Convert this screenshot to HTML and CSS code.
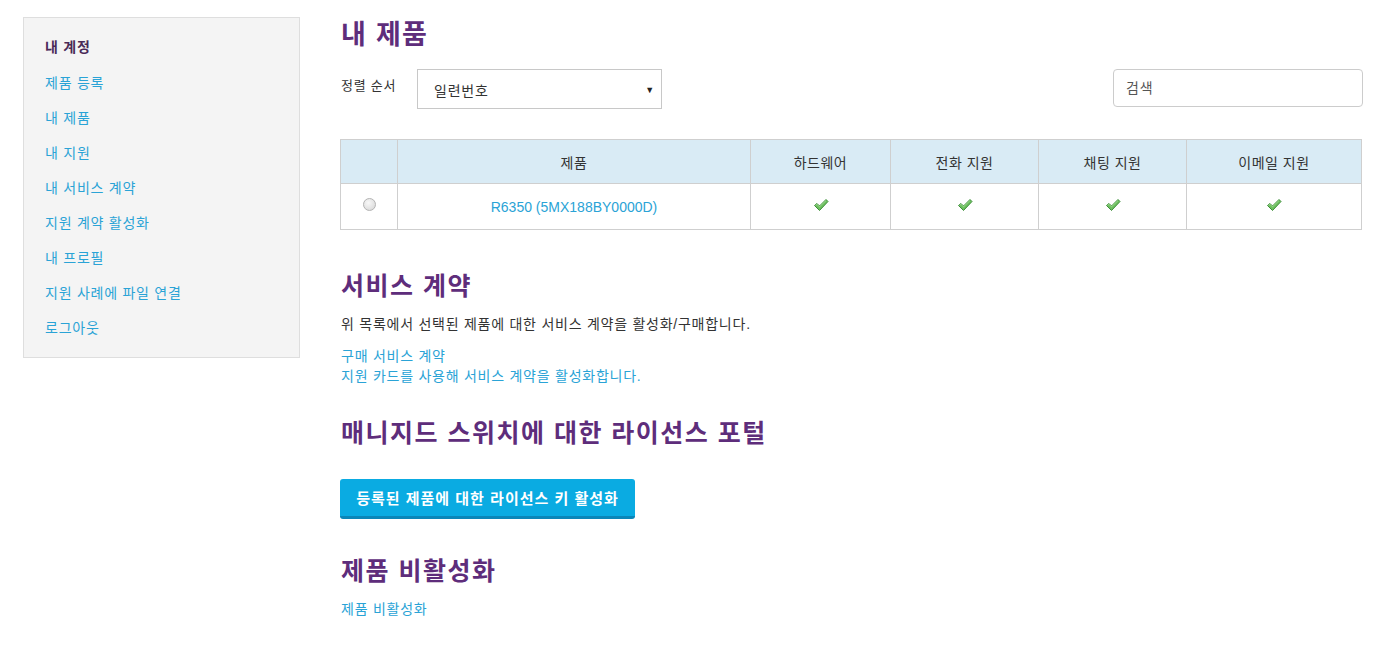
FILE: index.html
```html
<!DOCTYPE html>
<html lang="ko">
<head>
<meta charset="utf-8">
<title>내 제품</title>
<link rel="stylesheet" href="styles.css">
</head>
<body>
<div class="page">
  <aside class="sidebar">
    <div class="side-title">내 계정</div>
    <ul class="side-list">
      <li><a href="#">제품 등록</a></li>
      <li><a href="#">내 제품</a></li>
      <li><a href="#">내 지원</a></li>
      <li><a href="#">내 서비스 계약</a></li>
      <li><a href="#">지원 계약 활성화</a></li>
      <li><a href="#">내 프로필</a></li>
      <li><a href="#">지원 사례에 파일 연결</a></li>
      <li><a href="#">로그아웃</a></li>
    </ul>
  </aside>
  <main class="main">
    <h1 class="h-title">내 제품</h1>
    <div class="toolbar">
      <div class="sort">
        <span class="sort-label">정렬 순서</span>
        <div class="select"><span>일련번호</span><span class="arrow">▼</span></div>
      </div>
      <div class="search">검색</div>
    </div>
    <table class="products">
      <thead>
        <tr>
          <th class="c-radio"></th>
          <th class="c-prod">제품</th>
          <th class="c-hw">하드웨어</th>
          <th class="c-ph">전화 지원</th>
          <th class="c-ch">채팅 지원</th>
          <th class="c-em">이메일 지원</th>
        </tr>
      </thead>
      <tbody>
        <tr>
          <td><span class="radio"></span></td>
          <td><a class="prod-link" href="#">R6350 (5MX188BY0000D)</a></td>
          <td><svg class="check" viewBox="0 0 16 14" width="16" height="14"><path d="M1.5 7.5 L4 5.5 L6.5 8 L13 1.5 L15 3.5 L6.5 12.5 Z" fill="#6cbf5e" stroke="#3e8e3a" stroke-width="1" stroke-linejoin="round"/><path d="M2.5 7.4 L4 6.3 L6.5 8.8 L13 2.5" fill="none" stroke="#a8e09a" stroke-width="0.8"/></svg></td>
          <td><svg class="check" viewBox="0 0 16 14" width="16" height="14"><path d="M1.5 7.5 L4 5.5 L6.5 8 L13 1.5 L15 3.5 L6.5 12.5 Z" fill="#6cbf5e" stroke="#3e8e3a" stroke-width="1" stroke-linejoin="round"/><path d="M2.5 7.4 L4 6.3 L6.5 8.8 L13 2.5" fill="none" stroke="#a8e09a" stroke-width="0.8"/></svg></td>
          <td><svg class="check" viewBox="0 0 16 14" width="16" height="14"><path d="M1.5 7.5 L4 5.5 L6.5 8 L13 1.5 L15 3.5 L6.5 12.5 Z" fill="#6cbf5e" stroke="#3e8e3a" stroke-width="1" stroke-linejoin="round"/><path d="M2.5 7.4 L4 6.3 L6.5 8.8 L13 2.5" fill="none" stroke="#a8e09a" stroke-width="0.8"/></svg></td>
          <td><svg class="check" viewBox="0 0 16 14" width="16" height="14"><path d="M1.5 7.5 L4 5.5 L6.5 8 L13 1.5 L15 3.5 L6.5 12.5 Z" fill="#6cbf5e" stroke="#3e8e3a" stroke-width="1" stroke-linejoin="round"/><path d="M2.5 7.4 L4 6.3 L6.5 8.8 L13 2.5" fill="none" stroke="#a8e09a" stroke-width="0.8"/></svg></td>
        </tr>
      </tbody>
    </table>

    <h2 class="h-sec first">서비스 계약</h2>
    <p class="desc">위 목록에서 선택된 제품에 대한 서비스 계약을 활성화/구매합니다.</p>
    <div class="links">
      <a href="#">구매 서비스 계약</a>
      <a href="#">지원 카드를 사용해 서비스 계약을 활성화합니다.</a>
    </div>

    <h2 class="h-sec">매니지드 스위치에 대한 라이선스 포털</h2>
    <button class="btn">등록된 제품에 대한 라이선스 키 활성화</button>

    <h2 class="h-sec">제품 비활성화</h2>
    <div class="links"><a href="#">제품 비활성화</a></div>
  </main>
</div>
</body>
</html>
```

FILE: styles.css
```css
* { box-sizing: border-box; }
body {
  margin: 0;
  font-family: "Liberation Sans", "Noto Sans CJK KR", sans-serif;
  font-size: 14px;
  letter-spacing: 0.75px;
  color: #333;
  background: #fff;
}
a { color: #2aa3d6; text-decoration: none; }

.page {
  display: flex;
  align-items: flex-start;
  padding-left: 23px;
}

.sidebar {
  width: 277px;
  margin-top: 17px;
  background: #f4f4f4;
  border: 1px solid #dedede;
  padding: 12px 21px 11px;
  flex-shrink: 0;
}
.side-title {
  height: 35px;
  line-height: 35px;
  font-weight: bold;
  font-size: 14px;
  color: #4a2a58;
}
.side-list { list-style: none; margin: 1px 0 0; padding: 0; }
.side-list li {
  height: 35px;
  line-height: 35px;
  font-size: 14px;
}

.main {
  margin-left: 41px;
  width: 1022px;
}
.h-title {
  margin: 17px 0 0;
  font-size: 27px;
  line-height: 36px;
  letter-spacing: 1.3px;
  color: #5e2d7b;
  font-weight: bold;
}
.toolbar {
  margin-top: 16px;
  display: flex;
  justify-content: space-between;
  align-items: flex-start;
}
.sort { display: flex; align-items: flex-start; }
.sort-label {
  width: 76px;
  padding-top: 8px;
  line-height: 18px;
  font-size: 13px;
  color: #333;
}
.select {
  width: 245px;
  height: 40px;
  border: 1px solid #c8c8c8;
  display: flex;
  align-items: center;
  justify-content: space-between;
  padding: 2px 6px 0 16px;
  color: #333;
  font-size: 14px;
}
.arrow { font-size: 9px; color: #222; }
.search {
  width: 250px;
  height: 38px;
  border: 1px solid #ccc;
  border-radius: 4px;
  padding: 0 12px;
  line-height: 36px;
  color: #555;
  font-size: 14px;
}

.products {
  margin-top: 30px;
  margin-left: -1px;
  width: 1022px;
  border-collapse: collapse;
  border: 1px solid #cfcfcf;
}
.products th, .products td {
  border: 1px solid #cfcfcf;
  text-align: center;
  font-weight: normal;
}
.products th {
  background: #d9ebf5;
  height: 44px;
  color: #333;
  font-size: 14px;
  letter-spacing: 0.5px;
}
.products td {
  height: 46px;
  background: #fff;
}
.prod-link { letter-spacing: 0; }
.c-radio { width: 57px; }
.c-prod { width: 353px; }
.c-hw { width: 140px; }
.c-ph { width: 148px; }
.c-ch { width: 148px; }
.c-em { width: 175px; }

.radio {
  display: inline-block;
  width: 13px;
  height: 13px;
  border-radius: 50%;
  border: 1px solid #b4b4b4;
  background: radial-gradient(circle at 40% 35%, #f8f8f8, #d4d4d4);
  vertical-align: middle;
  margin-top: -6px;
}
.check { vertical-align: middle; margin-top: -6px; }

.h-sec {
  font-size: 25px;
  line-height: 32px;
  letter-spacing: 1.5px;
  color: #5e2d7b;
  font-weight: bold;
  margin: 31px 0 0;
}
.h-sec.first { margin-top: 40px; }
.desc {
  margin: 12px 0 0;
  line-height: 20px;
  font-size: 14px;
}
.links {
  margin-top: 12px;
  display: flex;
  flex-direction: column;
  line-height: 20px;
  font-size: 14px;
}
.btn {
  margin-top: 30px;
  margin-left: -1px;
  display: block;
  width: 295px;
  height: 40px;
  border: 0;
  border-bottom: 3px solid #0a86b8;
  border-radius: 3px;
  background: #0aabe2;
  color: #fff;
  font-family: inherit;
  font-weight: bold;
  font-size: 15px;
  letter-spacing: 1px;
  padding: 0;
}
.btn + .h-sec { margin-top: 36px; }
```
